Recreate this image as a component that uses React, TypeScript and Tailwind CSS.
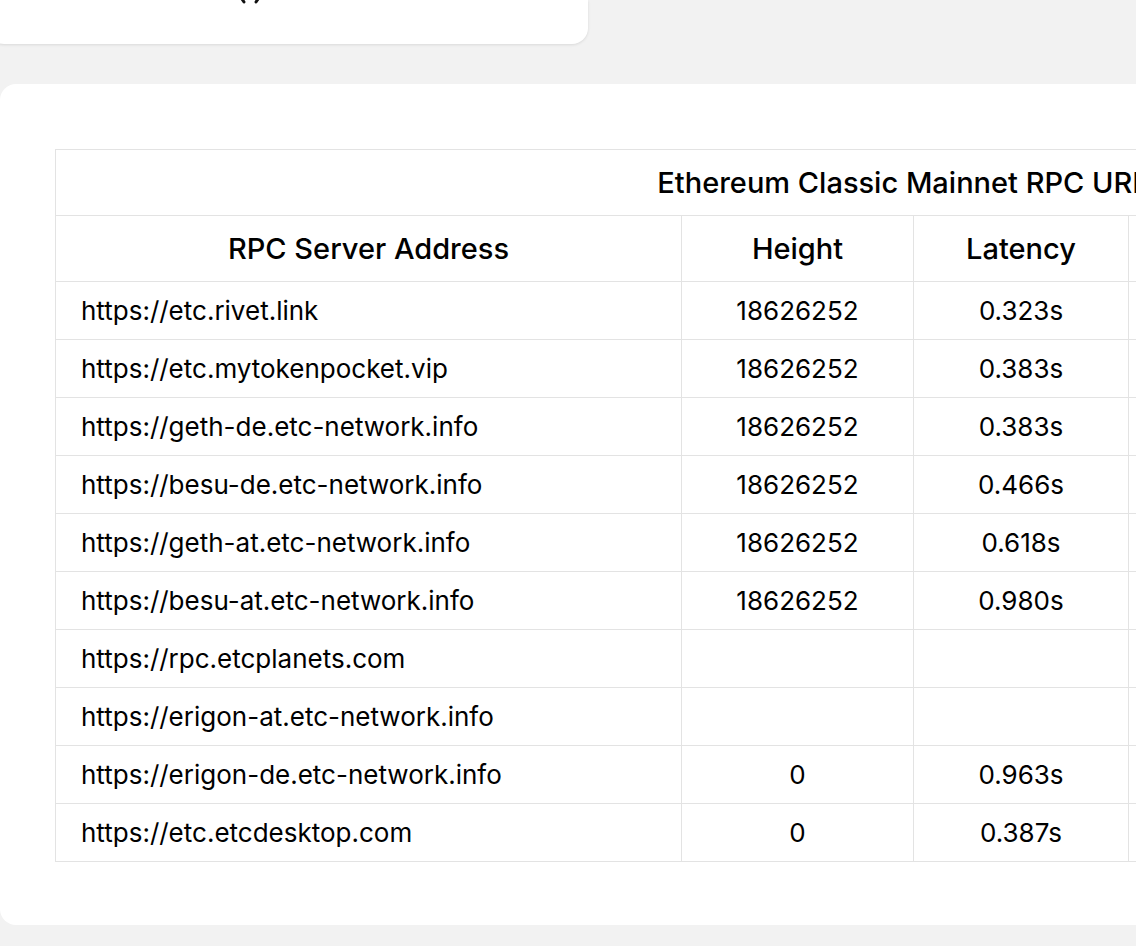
export default function App() {
  const rows = [
    ["https://etc.rivet.link", "18626252", "0.323s"],
    ["https://etc.mytokenpocket.vip", "18626252", "0.383s"],
    ["https://geth-de.etc-network.info", "18626252", "0.383s"],
    ["https://besu-de.etc-network.info", "18626252", "0.466s"],
    ["https://geth-at.etc-network.info", "18626252", "0.618s"],
    ["https://besu-at.etc-network.info", "18626252", "0.980s"],
    ["https://rpc.etcplanets.com", "", ""],
    ["https://erigon-at.etc-network.info", "", ""],
    ["https://erigon-de.etc-network.info", "0", "0.963s"],
    ["https://etc.etcdesktop.com", "0", "0.387s"],
  ];
  const b = "border border-[#e3e3e3]";
  return (
    <div className="w-[1136px] h-[946px] overflow-hidden bg-[#f2f2f2] text-black" style={{ fontFamily: "Inter, 'Noto Sans', sans-serif" }}>
      <div className="relative h-[44px] w-[600px] -ml-[12px] rounded-b-2xl bg-white shadow-[0_1px_3px_rgba(0,0,0,0.1)]">
        <svg className="absolute left-[248px] -top-[6px]" width="28" height="10" viewBox="0 0 28 10"><path d="M4 2 L8 8 M24 2 L20 8" stroke="#111" strokeWidth="3" strokeLinecap="round" /></svg>
      </div>
      <div className="mt-[40px] w-[1900px] h-[841px] rounded-2xl bg-white pl-[55px] pt-[65px]">
        <table className="border-collapse w-[1752px] table-fixed">
          <colgroup>
            <col className="w-[626px]" /><col className="w-[232px]" /><col className="w-[215px]" /><col className="w-[340px]" /><col className="w-[339px]" />
          </colgroup>
          <thead>
            <tr className="h-[66px]"><th colSpan={5} className={`${b} text-[29px] font-medium`}>Ethereum Classic Mainnet RPC URL List</th></tr>
            <tr className="h-[66px] text-[29px]">
              <th className={`${b} font-medium`}>RPC Server Address</th>
              <th className={`${b} font-medium`}>Height</th>
              <th className={`${b} font-medium`}>Latency</th>
              <th className={`${b} font-medium`}>Score</th>
              <th className={`${b} font-medium`}>Privacy</th>
            </tr>
          </thead>
          <tbody className="text-[26px]">
            {rows.map((r) => (
              <tr key={r[0]} className="h-[58px]">
                <td className={`${b} pl-[25px] whitespace-nowrap`}>{r[0]}</td>
                <td className={`${b} text-center`}>{r[1]}</td>
                <td className={`${b} text-center`}>{r[2]}</td>
                <td className={b}></td>
                <td className={b}></td>
              </tr>
            ))}
          </tbody>
        </table>
      </div>
    </div>
  );
}
